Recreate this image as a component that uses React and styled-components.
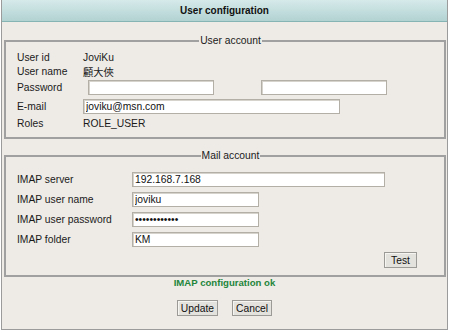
import styled, { createGlobalStyle } from "styled-components";

const GlobalStyle = createGlobalStyle`
  body {
    margin: 0;
    background: #ffffff;
    font-family: "Liberation Sans", Arial, "Noto Sans CJK TC", sans-serif;
    font-size: 10.3px;
    color: #1a1a1a;
  }
`;

export default function App() {
  return (
    <>
      <GlobalStyle />
      <Panel>
        <TitleBar>User configuration</TitleBar>

        <Fieldset $top="13px" $padTop="3px" $bottom="7px">
          <Legend>User account</Legend>
          <Grid $label="66px" $rows="14px 14px 18px 20px 14px">
            <Label>User id</Label>
            <Value>JoviKu</Value>
            <Label>User name</Label>
            <Value>顧大俠</Value>
            <Label>Password</Label>
            <PasswordRow>
              <Input type="password" $width="126px" />
              <Input type="password" $width="126px" />
            </PasswordRow>
            <Label>E-mail</Label>
            <Input type="text" $width="257px" defaultValue="joviku@msn.com" />
            <Label>Roles</Label>
            <Value>ROLE_USER</Value>
          </Grid>
        </Fieldset>

        <Fieldset $top="11px" $padTop="7px" $bottom="7px">
          <Legend>Mail account</Legend>
          <Grid $label="115px" $rows="repeat(4, 20px)">
            <Label>IMAP server</Label>
            <Input type="text" $width="253px" defaultValue="192.168.7.168" />
            <Label>IMAP user name</Label>
            <Input type="text" $width="127px" defaultValue="joviku" />
            <Label>IMAP user password</Label>
            <Input type="password" $width="127px" defaultValue="mailpassword" />
            <Label>IMAP folder</Label>
            <Input type="text" $width="127px" defaultValue="KM" />
          </Grid>
          <TestRow>
            <Button $min="33px">Test</Button>
          </TestRow>
        </Fieldset>

        <Status>IMAP configuration ok</Status>

        <Actions>
          <Button $min="40px">Update</Button>
          <Button $min="38px">Cancel</Button>
        </Actions>
      </Panel>
    </>
  );
}

const Panel = styled.div`
  box-sizing: border-box;
  width: 447px;
  height: 330px;
  margin-left: 1px;
  background: #eeebe6;
  border: 1px solid #9b9b9b;
  border-top: none;
  display: flex;
  flex-direction: column;
`;

const TitleBar = styled.div`
  height: 21px;
  display: flex;
  align-items: center;
  justify-content: center;
  font-weight: 700;
  font-size: 10px;
  color: #111;
  background: linear-gradient(#d6eaea, #b2d2d2);
  border-bottom: 1px solid #86b4b4;
`;

const Fieldset = styled.fieldset`
  margin: ${(p) => p.$top} 1px 0 2px;
  padding: ${(p) => p.$padTop} 0 ${(p) => p.$bottom} 11px;
  border: 2px solid #a0a0a0;
  min-width: 0;
`;

const Legend = styled.legend`
  margin: 0 auto;
  padding: 0 1px;
  font-size: 10.3px;
  line-height: 12px;
`;

const Grid = styled.div`
  display: grid;
  grid-template-columns: ${(p) => p.$label} 1fr;
  grid-template-rows: ${(p) => p.$rows};
  align-items: center;
`;

const Label = styled.span`
  white-space: nowrap;
`;

const Value = styled.span`
  white-space: nowrap;
`;

const PasswordRow = styled.div`
  display: flex;
  gap: 47px;
  padding-left: 5px;
`;

const Input = styled.input`
  box-sizing: border-box;
  width: ${(p) => p.$width};
  height: 15px;
  margin: 0;
  padding: 0 2px;
  font-family: "Liberation Sans", Arial, sans-serif;
  font-size: 10.3px;
  color: #111;
  background: #ffffff;
  border: 1px solid #b3afa7;
  box-shadow: inset 1px 1px 0 #d6d3cd;
  outline: none;
`;

const TestRow = styled.div`
  display: flex;
  justify-content: flex-end;
  padding: 3px 27px 0 0;
`;

const Button = styled.button`
  box-sizing: border-box;
  min-width: ${(p) => p.$min || "0"};
  height: 16px;
  margin: 0;
  padding: 0 3px;
  font-family: "Liberation Sans", Arial, sans-serif;
  font-size: 10.3px;
  color: #111;
  background: #e4e2dd;
  border: 1px solid #9c9a96;
  box-shadow: inset 1px 1px 0 #f6f5f2;
`;

const Status = styled.div`
  margin-top: -1px;
  height: 14px;
  line-height: 14px;
  text-align: center;
  font-weight: 700;
  font-size: 9.6px;
  color: #23853a;
`;

const Actions = styled.div`
  display: flex;
  justify-content: center;
  gap: 14px;
  margin-top: 10px;
`;
